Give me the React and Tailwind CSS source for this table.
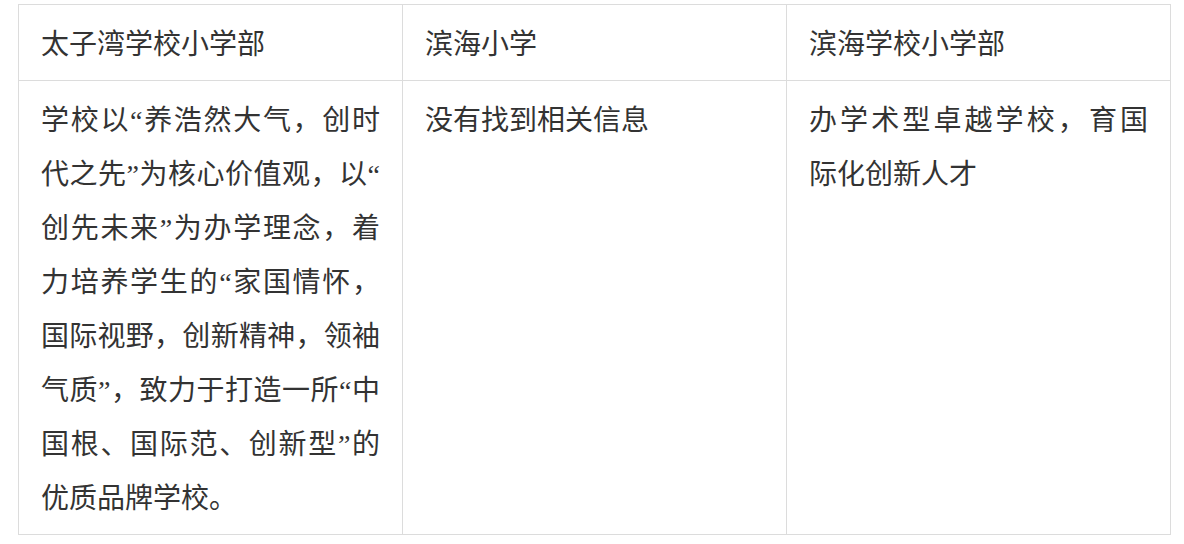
import React from 'react'

const headers = ['太子湾学校小学部', '滨海小学', '滨海学校小学部']

const columns = [
    [
        '学校以“养浩然大气，创时',
        '代之先”为核心价值观，以“',
        '创先未来”为办学理念，着',
        '力培养学生的“家国情怀，',
        '国际视野，创新精神，领袖',
        '气质”，致力于打造一所“中',
        '国根、国际范、创新型”的',
        '优质品牌学校。',
    ],
    ['没有找到相关信息'],
    ['办学术型卓越学校，育国', '际化创新人才'],
]

const Cell = ({ children }) => (
    <div className="border-r border-b border-[#dcdcdc] pl-[22px] pr-[22px] pt-[13px] pb-[8px]">
        {children}
    </div>
)

const App = () => {
    return (
        <div
            className="min-h-[544px] bg-white pl-[18px] pt-[4px] text-[#333333] text-[28px] leading-[54px]"
            style={{ fontFamily: '"Liberation Serif", "Noto Sans CJK SC", sans-serif' }}
        >
            <div className="grid grid-cols-[384px_384px_384px] w-[1153px] border-l border-t border-[#dcdcdc]">
                {headers.map((h) => (
                    <Cell key={h}>
                        <div className="whitespace-nowrap">{h}</div>
                    </Cell>
                ))}
                {columns.map((lines, i) => (
                    <Cell key={i}>
                        {lines.map((line, j) => (
                            <div
                                key={j}
                                className={
                                    j < lines.length - 1
                                        ? 'whitespace-nowrap text-justify [text-align-last:justify]'
                                        : 'whitespace-nowrap'
                                }
                            >
                                {line}
                            </div>
                        ))}
                    </Cell>
                ))}
            </div>
        </div>
    )
}

export default App
